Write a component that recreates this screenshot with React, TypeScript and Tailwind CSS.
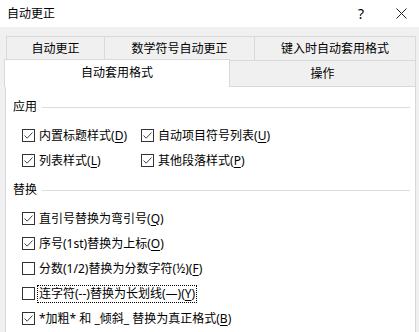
import React from "react";

const font = { fontFamily: '"Noto Sans", "Noto Sans CJK SC", sans-serif' };

type Item = { pre: string; key: string; post?: string; checked: boolean; focus?: boolean };

const Check: React.FC<{ checked: boolean }> = ({ checked }) => (
    <span className="w-[13px] h-[13px] border border-[#333] bg-white flex items-center justify-center shrink-0">
        {checked && (
            <svg width="11" height="11" viewBox="0 0 11 11">
                <path d="M1.5 5.5 L4.2 8.2 L9.5 2.5" fill="none" stroke="#444" strokeWidth="1" />
            </svg>
        )}
    </span>
);

const Label: React.FC<{ item: Item }> = ({ item }) => (
    <span
        className={
            item.focus
                ? "ml-[2px] px-[1px] border border-dotted border-black leading-[16px]"
                : "ml-[4px] leading-[18px]"
        }
    >
        {item.pre}(<span className="underline underline-offset-2">{item.key}</span>){item.post}
    </span>
);

const CheckRow: React.FC<{ item: Item; w?: string }> = ({ item, w }) => (
    <div className={"h-[25px] flex items-center " + (w ?? "")}>
        <Check checked={item.checked} />
        <Label item={item} />
    </div>
);

const Group: React.FC<{ title: string }> = ({ title }) => (
    <div className="h-[20px] flex items-center pl-[7px] pr-[5px]">
        <span>{title}</span>
        <span className="flex-1 h-px bg-[#dcdcdc] ml-[5px]" />
    </div>
);

const replaceItems: Item[] = [
    { pre: "直引号替换为弯引号", key: "Q", checked: true },
    { pre: "序号(1st)替换为上标", key: "O", checked: true },
    { pre: "分数(1/2)替换为分数字符(½)", key: "F", checked: false },
    { pre: "连字符(--)替换为长划线(—)", key: "Y", checked: false, focus: true },
    { pre: "*加粗* 和 _倾斜_ 替换为真正格式", key: "B", checked: true },
];

const App: React.FC = () => {
    return (
        <div className="w-[419px] h-[332px] bg-[#f0f0f0] overflow-hidden text-[12px] text-black" style={font}>
            <header className="h-[27px] bg-white flex items-center">
                <span className="ml-[7px] flex-1">自动更正</span>
                <span className="w-[20px] text-center text-[14px] mr-[25px]">?</span>
                <svg width="11" height="11" viewBox="0 0 11 11" className="mr-[12px]">
                    <path d="M0.5 0.5 L10.5 10.5 M10.5 0.5 L0.5 10.5" stroke="#222" strokeWidth="1" />
                </svg>
            </header>

            <div className="pt-[9px] pl-[6px] pr-[3px] flex">
                <div className="w-[99px] h-[25px] border border-[#d9d9d9] flex items-center justify-center">自动更正</div>
                <div className="w-[150px] h-[25px] border border-l-0 border-[#d9d9d9] flex items-center justify-center">数学符号自动更正</div>
                <div className="w-[161px] h-[25px] border border-l-0 border-[#d9d9d9] flex items-center justify-center">键入时自动套用格式</div>
            </div>

            <div className="pl-[4px] pr-[3px] flex items-end h-[25px] relative z-10">
                <div className="w-[226px] h-[28px] mb-[-1px] bg-white border border-b-0 border-[#d9d9d9] flex items-center justify-center pb-[1px]">自动套用格式</div>
                <div className="w-[186px] h-[25px] border-r border-[#d9d9d9] flex items-center justify-center">操作</div>
            </div>

            <div className="ml-[5px] mr-[3px] h-[260px] bg-white border border-[#d9d9d9] pt-[10px]">
                <Group title="应用" />
                <div className="mt-[6px] pl-[16px]">
                    <div className="flex">
                        <CheckRow w="w-[119px]" item={{ pre: "内置标题样式", key: "D", checked: true }} />
                        <CheckRow item={{ pre: "自动项目符号列表", key: "U", checked: true }} />
                    </div>
                    <div className="flex">
                        <CheckRow w="w-[119px]" item={{ pre: "列表样式", key: "L", checked: true }} />
                        <CheckRow item={{ pre: "其他段落样式", key: "P", checked: true }} />
                    </div>
                </div>

                <div className="mt-[7px]">
                    <Group title="替换" />
                </div>
                <div className="mt-[6px] pl-[16px]">
                    {replaceItems.map((it) => (
                        <CheckRow key={it.key} item={it} />
                    ))}
                </div>
            </div>
        </div>
    );
};

export default App;
